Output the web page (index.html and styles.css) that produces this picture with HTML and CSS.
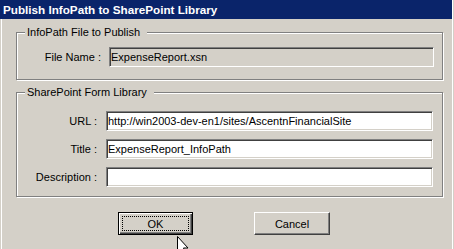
FILE: index.html
```html
<!DOCTYPE html>
<html lang="en">
<head>
    <meta charset="UTF-8">
    <title>Publish InfoPath to SharePoint Library</title>
    <link rel="stylesheet" href="styles.css">
</head>
<body>
    <div class="window">
        <div class="titlebar">Publish InfoPath to SharePoint Library</div>

        <div class="content">
            <fieldset class="group group-file">
                <legend>InfoPath File to Publish</legend>
                <div class="row">
                    <label for="fileName">File Name :</label>
                    <input type="text" id="fileName" class="field field-disabled" value="ExpenseReport.xsn" readonly>
                </div>
            </fieldset>

            <fieldset class="group group-library">
                <legend>SharePoint Form Library</legend>
                <div class="row">
                    <label for="url">URL :</label>
                    <input type="text" id="url" class="field" value="http://win2003-dev-en1/sites/AscentnFinancialSite">
                </div>
                <div class="row">
                    <label for="title">Title :</label>
                    <input type="text" id="title" class="field" value="ExpenseReport_InfoPath">
                </div>
                <div class="row">
                    <label for="description">Description :</label>
                    <input type="text" id="description" class="field" value="">
                </div>
            </fieldset>

            <div class="buttons">
                <button class="btn btn-default"><span class="focus-rect">OK</span></button>
                <button class="btn">Cancel</button>
            </div>
        </div>

        <!-- mouse pointer hovering under the OK button -->
        <svg class="cursor" width="14" height="22" viewBox="0 0 14 22">
            <path d="M1.5 1.5 V17.5 L5 14 L8 20.5 L10.5 19.5 L7.5 13 H12 Z" fill="#fff" stroke="#000" stroke-width="1" stroke-linejoin="miter"/>
        </svg>
    </div>
</body>
</html>
```

FILE: styles.css
```css
* {
    margin: 0;
    padding: 0;
    box-sizing: border-box;
}

body {
    font-family: "Liberation Sans", Arial, sans-serif;
    font-size: 11px;
    color: #000;
    background: #d4d0c8;
}

.window {
    position: relative;
    width: 454px;
    height: 249px;
    overflow: hidden;
    background: #d4d0c8;
    box-shadow: inset 1px 0 0 #d4d0c8, inset 2px 0 0 #fff, inset -1px 0 0 #d4d0c8, inset -2px 0 0 #fff;
}

.titlebar {
    height: 19px;
    width: 452px;
    padding-left: 3px;
    background: #0a246a;
    color: #fff;
    font-weight: bold;
    font-size: 11.7px;
    line-height: 19px;
    white-space: nowrap;
}

.content {
    padding-left: 16px;
}

.group {
    width: 427px;
    min-width: 0;
    border: 1px solid #808080;
    box-shadow: 1px 1px 0 #fff, inset 1px 1px 0 #fff;
}

.group legend {
    margin-left: 8px;
    padding: 0 7px 0 2px;
    line-height: 13px;
    background: #d4d0c8;
}

.group-file {
    margin-top: 7px;
    padding: 8px 0 12px 0;
}

.group-library {
    margin-top: 6px;
    padding: 12px 0 9px 0;
    display: flex;
    flex-direction: column;
    gap: 8px;
}

.row {
    display: flex;
    align-items: center;
    height: 20px;
}

.row label {
    width: 80px;
    margin-right: 9px;
    text-align: right;
    white-space: nowrap;
}

.group-file .row label {
    width: 84px;
    margin-right: 8px;
}

.field {
    width: 327px;
    height: 20px;
    padding: 0 1px;
    font-family: inherit;
    font-size: 11px;
    color: #000;
    background: #fff;
    border: 1px solid;
    border-color: #808080 #fff #fff #808080;
    box-shadow: inset 1px 1px 0 #404040, inset -1px -1px 0 #d4d0c8;
    outline: none;
}

.group-file .field {
    width: 325px;
}

.field-disabled {
    background: #d4d0c8;
}

.buttons {
    display: flex;
    gap: 61px;
    margin-top: 15px;
    padding-left: 102px;
}

.btn {
    width: 76px;
    height: 23px;
    font-family: inherit;
    font-size: 11px;
    color: #000;
    background: #d4d0c8;
    border: 1px solid;
    border-color: #fff #404040 #404040 #fff;
    box-shadow: inset -1px -1px 0 #808080;
}

.btn-default {
    width: 75px;
    border-color: #000;
    box-shadow: inset 1px 1px 0 #fff, inset -1px -1px 0 #404040, inset -2px -2px 0 #808080;
    padding: 3px;
}

.focus-rect {
    display: flex;
    align-items: center;
    justify-content: center;
    height: 100%;
    border: 1px dotted #000;
}

.cursor {
    position: absolute;
    left: 176px;
    top: 235px;
}
```
